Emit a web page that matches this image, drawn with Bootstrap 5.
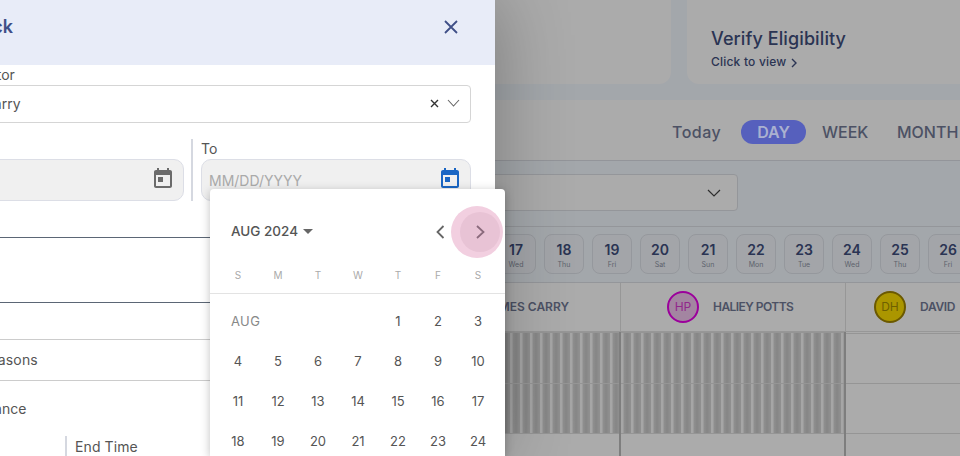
<!DOCTYPE html>
<html lang="en">
<head>
    <meta charset="UTF-8">
    <meta name="viewport" content="width=device-width, initial-scale=1.0">
    <title>Add Block</title>
    <link href="https://cdn.jsdelivr.net/npm/bootstrap@5.3.0/dist/css/bootstrap.min.css" rel="stylesheet">
    <script src="https://cdn.jsdelivr.net/npm/bootstrap@5.3.0/dist/js/bootstrap.bundle.min.js"></script>
    <style>
        html, body { height: 456px; overflow: hidden; }
        body { font-family: "Inter", "Open Sans", sans-serif; background: #fff; color: #444; position: relative; }

        /* page behind the dialog */
        .page-bg { height: 456px; width: 960px; overflow: hidden; background: #f4f9ff; }
        .top-cards { height: 84px; gap: 16px; }
        .top-card { background: #fff; border-radius: 0 0 12px 12px; }
        .top-card-a { width: 671px; }
        .top-card-b { flex: 1; padding: 27px 24px 0; border-bottom-right-radius: 0; }
        .verify-title { font-size: 18px; font-weight: 500; color: #3f4e7c; line-height: 24px; letter-spacing: .1px; }
        .verify-link { font-size: 12px; font-weight: 500; color: #3f4e7c; line-height: 18px; margin-top: 2px; letter-spacing: .2px; }
        .verify-link svg { margin-left: 0; }
        .toolbar { height: 61px; margin-top: 16px; background: #fff; border-bottom: 1px solid #dcdfe6; padding: 4px 0 0 672px; }
        .tool-link { font-size: 16px; font-weight: 500; color: #727a96; }
        .tool-today { width: 50px; letter-spacing: .5px; white-space: nowrap; }
        /* pill keeps its full colour over the dim layer */
        .tool-pill { position: relative; z-index: 1; width: 65px; height: 24px; border-radius: 12px; background: #5660bd; color: #aab1d0; font-weight: 600; margin: 0 16px 0 19px; }
        .tool-week { width: 44px; margin-right: 31px; }
        .filter-bar { height: 65px; padding-top: 13px; }
        .filter-select { width: 738px; height: 37px; background: #fff; border: 1px solid #dde0e6; border-radius: 4px; padding-right: 16px; }
        .date-strip { height: 57px; padding: 7px 0 0 496px; border-top: 1px solid #dde0e6; border-bottom: 1px solid #dde0e6; gap: 8px; background: #f4f9ff; }
        .date-box { width: 40px; height: 40px; flex: none; border: 1px solid #dfe3ea; border-radius: 8px; text-align: center; background: #f3f7fd; }
        .date-num { font-size: 14px; font-weight: 600; color: #3f4e7c; line-height: 20px; margin-top: 5px; }
        .date-day { font-size: 7px; color: #8d93a3; line-height: 9px; }
        .staff-head { height: 49px; background: #fff; border-bottom: 1px solid #e2e2e2; }
        .staff-cell { font-size: 12px; font-weight: 600; color: #727a96; white-space: nowrap; }
        .staff-a { width: 621px; padding-right: 51px; justify-content: flex-end; border-right: 1px solid #e2e2e2; }
        .staff-b { width: 225px; padding-left: 46px; gap: 14px; border-right: 1px solid #e2e2e2; letter-spacing: -.55px; }
        .staff-c { flex: 1; padding-left: 28px; gap: 14px; letter-spacing: -.3px; }
        .avatar-dot { width: 32px; height: 32px; flex: none; border-radius: 50%; font-size: 12px; font-weight: 400; letter-spacing: 0; }
        .avatar-hp { border: 2px solid #e800e8; background: #f4c6f0; color: #d93ad0; }
        .avatar-dh { border: 2px solid #a08500; background: #ffe000; color: #a59000; }
        .slot-grid { background: #fff; height: 124px; }
        .slot-col-a { width: 621px; border-right: 2px solid #bdbdbd; }
        .slot-col-b { width: 225px; border-right: 2px solid #bdbdbd; }
        .slot-col-c { flex: 1; padding-top: 1px; }
        .slot-row { height: 50px; border-top: 1px solid #dedede; }
        .slot-tall { height: 51px; }
        .slot-hatch { background: repeating-linear-gradient(90deg, #f8f8f8 0 2px, #d6d6d6 3px, #c8c8c8 6px, #d8d8d8 10px); }

        .dim-layer { position: absolute; inset: 0; background: rgba(0, 0, 0, .33); }

        /* dialog, runs off the left edge */
        .block-dialog { position: absolute; top: 0; left: -110px; width: 605px; height: 456px; background: #fff; box-shadow: 0 0 70px rgba(0, 0, 0, .3); overflow: hidden; }
        .dialog-head { height: 65px; background: #e8ecf8; padding: 0 36px 12px 35px; }
        .dialog-title { font-size: 18px; font-weight: 600; color: #3f4f87; }
        .dialog-body { padding: 0 24px; }
        .field-label { font-size: 14px; line-height: 20px; color: #555; }
        .doctor-label { padding-left: 11px; }
        .field-select { height: 38px; border: 1px solid #d5d5d5; border-radius: 4px; padding: 0 10px 2px 21px; font-size: 14px; color: #555; }
        .date-row { margin-top: 16px; height: 62px; }
        .date-col { width: 270px; }
        .date-split { width: 9px; border-right: 2px solid #d5d8e0; margin-right: 8px; }
        .date-field { position: relative; }
        .date-input { height: 42px; background: #f0f0f0; border: 1px solid #dcdee6; border-radius: 10px; font-size: 14px; color: #555; padding-left: 7px; }
        .date-input::placeholder { color: #aaa; }
        .date-icon { position: absolute; right: 9px; top: 8px; }
        .line-row { height: 27px; margin-top: 10px; padding: 6px 0 0 15px; line-height: 20px; border-bottom: 1px solid #5b6675; font-size: 14px; color: #555; }
        .line-blank { height: 65px; border-bottom: 1px solid #5b6675; }
        .reason-row { height: 42px; margin-top: 36px; padding: 0 0 2px 24px; letter-spacing: .2px; border-top: 1px solid #ccc; border-bottom: 1px solid #ccc; font-size: 14px; color: #555; }
        .attend-row { height: 20px; margin-top: 17px; padding-left: 37px; font-size: 14px; color: #555; }
        .time-row { margin-top: 18px; font-size: 14px; color: #555; }
        .time-start { width: 153px; border-right: 2px solid #d5d8e0; height: 30px; }
        .time-end { padding: 1px 0 0 8px; line-height: 20px; letter-spacing: .1px; }

        /* date picker */
        .date-picker { position: absolute; left: 210px; top: 189px; width: 295px; height: 267px; background: #fff; border-radius: 4px 4px 0 0; box-shadow: 0 2px 10px rgba(0, 0, 0, .25); overflow: hidden; }
        .picker-head { height: 84px; padding: 32px 0 0 21px; position: relative; }
        .picker-month { font-size: 13.5px; font-weight: 500; color: #555; line-height: 20px; }
        .picker-caret { width: 0; height: 0; border-left: 5px solid transparent; border-right: 5px solid transparent; border-top: 5px solid #666; margin-left: 5px; }
        .picker-halo { position: absolute; left: 241px; top: 17px; width: 52px; height: 52px; border-radius: 50%; background: #f2cfe0; }
        .picker-halo-in { position: absolute; left: 250px; top: 23px; width: 40px; height: 40px; border-radius: 50%; background: #e8c3d5; }
        .picker-arrow { position: absolute; top: 35px; }
        .arrow-prev { left: 224px; }
        .arrow-next { left: 264px; }
        .picker-grid { display: grid; grid-template-columns: repeat(7, 40px); padding-left: 8px; }
        .picker-week { height: 20px; margin-top: -8px; }
        .picker-rule { border-top: 1px solid #e3e3e3; margin-top: 8px; }
        .picker-days { margin-top: 8px; grid-auto-rows: 40px; }
        .week-cell { font-size: 10px; color: #aaa; text-align: center; line-height: 20px; }
        .day-cell { font-size: 13px; color: #555; display: flex; align-items: center; justify-content: center; }
        .month-cell { grid-column: span 4; font-size: 13px; letter-spacing: .4px; color: #888; display: flex; align-items: center; padding-left: 13px; }
    </style>
</head>
<body>
    <div class="page-bg">
        <div class="d-flex top-cards">
            <div class="top-card top-card-a"></div>
            <div class="top-card top-card-b">
                <div class="verify-title">Verify Eligibility</div>
                <div class="verify-link">Click to view
                    <svg width="8" height="10" viewBox="0 0 8 10" fill="none" stroke="#3f4e7c" stroke-width="1.4"><path d="M2 1l4 4-4 4"/></svg>
                </div>
            </div>
        </div>
        <div class="toolbar d-flex align-items-center">
            <span class="tool-link tool-today">Today</span>
            <span class="tool-link tool-pill d-flex align-items-center justify-content-center">DAY</span>
            <span class="tool-link tool-week">WEEK</span>
            <span class="tool-link">MONTH</span>
        </div>
        <div class="filter-bar">
            <div class="filter-select d-flex align-items-center justify-content-end">
                <svg width="14" height="8" viewBox="0 0 14 8" fill="none" stroke="#444" stroke-width="1.2"><path d="M1 1l6 6 6-6"/></svg>
            </div>
        </div>
        <div class="date-strip d-flex" id="dateStrip"></div>
        <div class="staff-head d-flex">
            <div class="staff-cell staff-a d-flex align-items-center">JAMES CARRY</div>
            <div class="staff-cell staff-b d-flex align-items-center">
                <span class="avatar-dot avatar-hp d-flex align-items-center justify-content-center">HP</span>HALIEY POTTS
            </div>
            <div class="staff-cell staff-c d-flex align-items-center">
                <span class="avatar-dot avatar-dh d-flex align-items-center justify-content-center">DH</span>DAVID
            </div>
        </div>
        <div class="slot-grid d-flex">
            <div class="slot-col-a"><div class="slot-row slot-tall slot-hatch"></div><div class="slot-row slot-hatch"></div><div class="slot-row"></div></div>
            <div class="slot-col-b"><div class="slot-row slot-tall slot-hatch"></div><div class="slot-row slot-hatch"></div><div class="slot-row"></div></div>
            <div class="slot-col-c"><div class="slot-row"></div><div class="slot-row"></div><div class="slot-row"></div></div>
        </div>
    </div>

    <div class="dim-layer"></div>

    <div class="block-dialog">
        <div class="dialog-head d-flex align-items-center justify-content-between">
            <span class="dialog-title">Add Block</span>
            <svg width="16" height="16" viewBox="0 0 16 16" fill="none" stroke="#3f4f87" stroke-width="1.8"><path d="M2 2l12 12M14 2L2 14"/></svg>
        </div>
        <div class="dialog-body">
            <div class="field-label doctor-label">Select Doctor</div>
            <div class="field-select d-flex align-items-center justify-content-between">
                <span>James Carry</span>
                <span class="d-flex align-items-center gap-2">
                    <svg width="9" height="9" viewBox="0 0 9 9" fill="none" stroke="#333" stroke-width="1.4"><path d="M1 1l7 7M8 1L1 8"/></svg>
                    <svg width="13" height="8" viewBox="0 0 13 8" fill="none" stroke="#666" stroke-width="1.1"><path d="M1 1l5.5 6L12 1"/></svg>
                </span>
            </div>
            <div class="d-flex date-row">
                <div class="date-col">
                    <div class="field-label">From</div>
                    <div class="date-field">
                        <input class="form-control date-input" type="text">
                        <svg class="date-icon" width="24" height="24" viewBox="0 0 24 24" fill="#6b6b6b"><path d="M19 3h-1V1h-2v2H8V1H6v2H5c-1.11 0-1.99.9-1.99 2L3 19c0 1.1.89 2 2 2h14c1.1 0 2-.9 2-2V5c0-1.1-.9-2-2-2zm0 16H5V8h14v11zM7 10h5v5H7z"/></svg>
                    </div>
                </div>
                <div class="date-split"></div>
                <div class="date-col">
                    <div class="field-label">To</div>
                    <div class="date-field">
                        <input class="form-control date-input" type="text" placeholder="MM/DD/YYYY">
                        <svg class="date-icon" width="24" height="24" viewBox="0 0 24 24" fill="#1a66c4"><path d="M19 3h-1V1h-2v2H8V1H6v2H5c-1.11 0-1.99.9-1.99 2L3 19c0 1.1.89 2 2 2h14c1.1 0 2-.9 2-2V5c0-1.1-.9-2-2-2zm0 16H5V8h14v11zM7 10h5v5H7z"/></svg>
                    </div>
                </div>
            </div>
            <div class="line-row">Block Title</div>
            <div class="line-blank"></div>
            <div class="reason-row d-flex align-items-center">Other Reasons</div>
            <div class="attend-row">Attendance</div>
            <div class="time-row d-flex">
                <div class="time-start">Start Time</div>
                <div class="time-end">End Time</div>
            </div>
        </div>
    </div>

    <div class="date-picker">
        <div class="picker-head">
            <div class="d-flex align-items-center picker-month">AUG 2024<span class="picker-caret"></span></div>
            <span class="picker-halo"></span>
            <span class="picker-halo-in"></span>
            <svg class="picker-arrow arrow-prev" width="12" height="16" viewBox="0 0 12 16" fill="none" stroke="#666" stroke-width="1.8"><path d="M9.5 2l-6 6 6 6"/></svg>
            <svg class="picker-arrow arrow-next" width="12" height="16" viewBox="0 0 12 16" fill="none" stroke="#8a6a7c" stroke-width="1.8"><path d="M3 2l6.5 6L3 14"/></svg>
        </div>
        <div class="picker-grid picker-week">
            <span class="week-cell">S</span><span class="week-cell">M</span><span class="week-cell">T</span><span class="week-cell">W</span><span class="week-cell">T</span><span class="week-cell">F</span><span class="week-cell">S</span>
        </div>
        <div class="picker-rule"></div>
        <div class="picker-grid picker-days" id="pickerDays">
            <span class="month-cell">AUG</span>
        </div>
    </div>

    <script>
        const days = ["Wed", "Thu", "Fri", "Sat", "Sun", "Mon", "Tue", "Wed", "Thu", "Fri"];
        const strip = document.getElementById("dateStrip");
        days.forEach((d, i) => {
            strip.insertAdjacentHTML("beforeend",
                '<div class="date-box"><div class="date-num">' + (17 + i) + '</div><div class="date-day">' + d + '</div></div>');
        });

        const grid = document.getElementById("pickerDays");
        for (let n = 1; n <= 24; n++) {
            grid.insertAdjacentHTML("beforeend", '<span class="day-cell">' + n + '</span>');
        }
    </script>
</body>
</html>
